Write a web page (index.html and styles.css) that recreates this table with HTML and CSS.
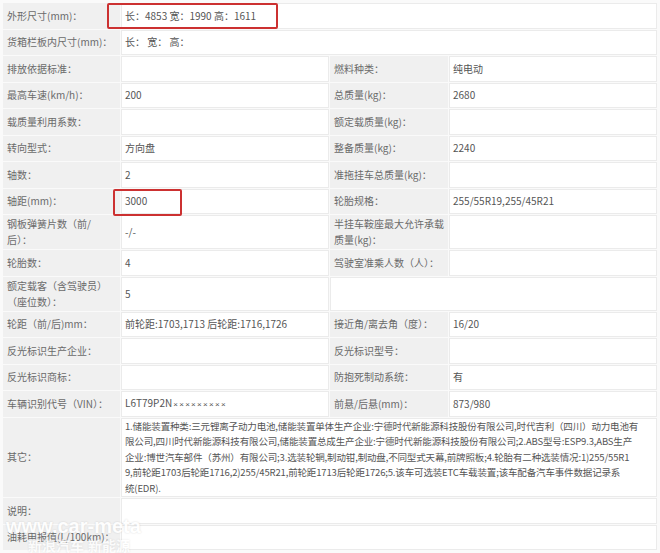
FILE: index.html
```html
<!DOCTYPE html>
<html lang="zh-CN">
<head>
  <meta charset="UTF-8">
  <meta name="viewport" content="width=device-width, initial-scale=1.0">
  <title>车型参数</title>
  <link rel="stylesheet" href="styles.css">
</head>
<body>
  <div class="sheet">
    <table class="params">
      <colgroup>
        <col class="col-label">
        <col class="col-value">
        <col class="col-label2">
        <col class="col-value">
      </colgroup>
      <tr>
        <td class="label">外形尺寸(mm)：</td>
        <td class="value mark-cell" colspan="3">长：4853 宽：1990 高：1611<span class="mark mark-size"></span></td>
      </tr>
      <tr>
        <td class="label">货箱栏板内尺寸(mm)：</td>
        <td class="value" colspan="3">长：&nbsp;宽：&nbsp;高：</td>
      </tr>
      <tr>
        <td class="label">排放依据标准：</td>
        <td class="value"></td>
        <td class="label">燃料种类：</td>
        <td class="value">纯电动</td>
      </tr>
      <tr>
        <td class="label">最高车速(km/h)：</td>
        <td class="value">200</td>
        <td class="label">总质量(kg)：</td>
        <td class="value">2680</td>
      </tr>
      <tr>
        <td class="label">载质量利用系数：</td>
        <td class="value"></td>
        <td class="label">额定载质量(kg)：</td>
        <td class="value"></td>
      </tr>
      <tr>
        <td class="label">转向型式：</td>
        <td class="value">方向盘</td>
        <td class="label">整备质量(kg)：</td>
        <td class="value">2240</td>
      </tr>
      <tr>
        <td class="label">轴数：</td>
        <td class="value">2</td>
        <td class="label">准拖挂车总质量(kg)：</td>
        <td class="value"></td>
      </tr>
      <tr>
        <td class="label">轴距(mm)：</td>
        <td class="value mark-cell">3000<span class="mark mark-wheelbase"></span></td>
        <td class="label">轮胎规格：</td>
        <td class="value">255/55R19,255/45R21</td>
      </tr>
      <tr>
        <td class="label">钢板弹簧片数（前/<br>后）：</td>
        <td class="value">-/-</td>
        <td class="label">半挂车鞍座最大允许承载<br>质量(kg)：</td>
        <td class="value"></td>
      </tr>
      <tr>
        <td class="label">轮胎数：</td>
        <td class="value">4</td>
        <td class="label">驾驶室准乘人数（人）：</td>
        <td class="value"></td>
      </tr>
      <tr>
        <td class="label">额定载客（含驾驶员）<br>（座位数）：</td>
        <td class="value">5</td>
        <td class="value" colspan="2"></td>
      </tr>
      <tr>
        <td class="label">轮距（前/后)mm：</td>
        <td class="value">前轮距:1703,1713 后轮距:1716,1726</td>
        <td class="label">接近角/离去角（度）：</td>
        <td class="value">16/20</td>
      </tr>
      <tr>
        <td class="label">反光标识生产企业：</td>
        <td class="value"></td>
        <td class="label">反光标识型号：</td>
        <td class="value"></td>
      </tr>
      <tr>
        <td class="label">反光标识商标：</td>
        <td class="value"></td>
        <td class="label">防抱死制动系统：</td>
        <td class="value">有</td>
      </tr>
      <tr>
        <td class="label">车辆识别代号（VIN）：</td>
        <td class="value">L6T79P2N<span class="vin-mask">×××××××××</span></td>
        <td class="label">前悬/后悬(mm)：</td>
        <td class="value">873/980</td>
      </tr>
      <tr>
        <td class="label">其它：</td>
        <td class="value notes" colspan="3">1.储能装置种类:三元锂离子动力电池,储能装置单体生产企业:宁德时代新能源科技股份有限公司,时代吉利（四川）动力电池有<br>限公司,四川时代新能源科技有限公司,储能装置总成生产企业:宁德时代新能源科技股份有限公司;2.ABS型号:ESP9.3,ABS生产<br>企业:博世汽车部件（苏州）有限公司;3.选装轮辋,制动钳,制动盘,不同型式天幕,前牌照板;4.轮胎有二种选装情况:1)255/55R1<br>9,前轮距1703后轮距1716,2)255/45R21,前轮距1713后轮距1726;5.该车可选装ETC车载装置;该车配备汽车事件数据记录系<br>统(EDR).</td>
      </tr>
      <tr>
        <td class="label">说明：</td>
        <td class="value" colspan="3"></td>
      </tr>
      <tr>
        <td class="label">油耗申报值(L/100km)：</td>
        <td class="value" colspan="3"></td>
      </tr>
    </table>

    <div class="watermark">
      <div class="wm-site">www.car-meta</div>
      <div class="wm-name">新浪汽车 新能源</div>
    </div>
  </div>
</body>
</html>
```

FILE: styles.css
```css
* {
  margin: 0;
  padding: 0;
  box-sizing: border-box;
}

body {
  font-family: "Noto Sans CJK SC", "Noto Sans", sans-serif;
  font-size: 10px;
  background: #fafafa;
  color: #666;
  width: 660px;
  height: 553px;
  overflow: hidden;
}

.sheet {
  position: relative;
  padding: 2px 0 0 2px;
}

.params {
  width: 655px;
  table-layout: fixed;
  border-collapse: separate;
  border-spacing: 1px;
}

.col-label { width: 117px; }
.col-label2 { width: 118px; }
.col-value { width: 208px; }

.params td {
  height: 25.5px;
  padding: 0 3px;
  line-height: 16px;
  vertical-align: middle;
  border: 1px solid #ebebeb;
  word-break: break-all;
}

.label {
  background: #f0f0f0;
  border-color: #f0f0f0 !important;
  color: #6a6a6a;
}

.value {
  background: #fff;
  color: #555;
}

.vin-mask {
  font-family: "Liberation Sans", sans-serif;
  font-size: 8px;
  letter-spacing: 1.3px;
  margin-left: 1px;
}

.notes {
  padding: 0 3px !important;
  font-size: 9.5px;
  letter-spacing: -0.15px;
  line-height: 15.5px !important;
  white-space: nowrap;
}

.mark-cell {
  position: relative;
}

.mark {
  position: absolute;
  border: 2px solid #cc3131;
  border-radius: 2px;
  pointer-events: none;
}

.mark-size {
  left: -15px;
  top: -1px;
  width: 171px;
  height: 26px;
}

.mark-wheelbase {
  left: -9px;
  top: -1px;
  width: 69px;
  height: 27px;
}

.watermark {
  position: absolute;
  left: 6px;
  top: 515px;
  color: #fff;
  font-family: "Liberation Sans", "Noto Sans CJK SC", sans-serif;
  font-weight: bold;
  text-shadow: 0 0 2px rgba(0, 0, 0, 0.15);
  pointer-events: none;
}

.wm-site {
  font-size: 20px;
  line-height: 22px;
  opacity: 0.9;
}

.wm-name {
  font-size: 14px;
  line-height: 18px;
  padding-left: 22px;
  opacity: 0.75;
}
```
